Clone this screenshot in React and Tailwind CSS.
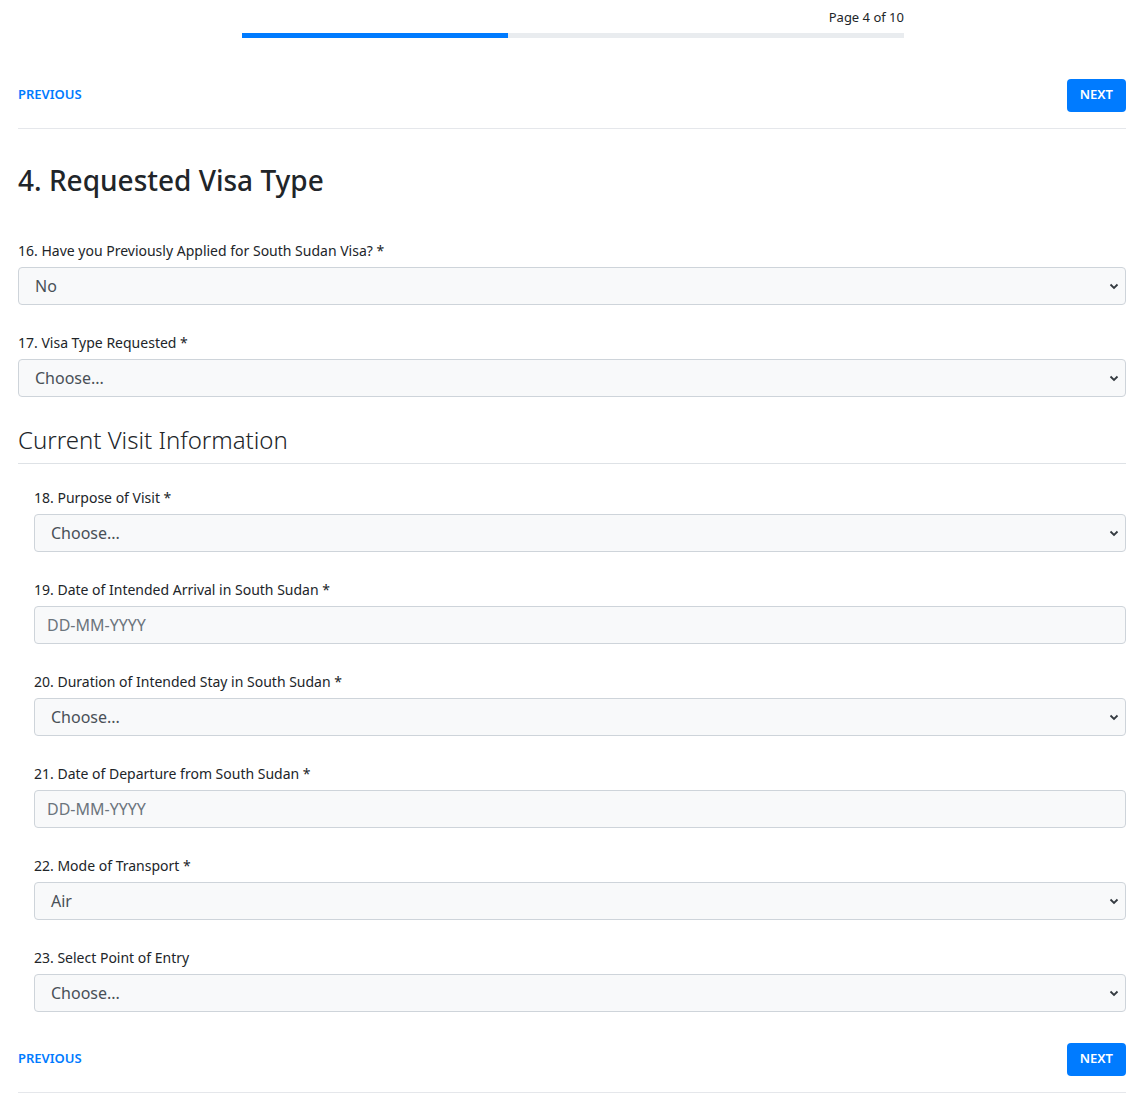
import React from "react";

const Chevron = () => (
  <svg className="absolute right-[6px] top-1/2 -translate-y-1/2 pointer-events-none" width="10" height="10" viewBox="0 0 10 10">
    <path d="M1.5 3.5 L5 7 L8.5 3.5" fill="none" stroke="#343a40" strokeWidth="1.8" />
  </svg>
);

const Select = ({ value }) => (
  <div className="relative h-[38px] border border-[#ced4da] rounded-[4px] bg-[#f8f9fa] flex items-center pl-4 text-[16px] text-[#495057]">
    {value}
    <Chevron />
  </div>
);

const DateInput = () => (
  <div className="h-[38px] border border-[#ced4da] rounded-[4px] bg-[#f8f9fa] flex items-center pl-3 text-[16px] text-[#6c757d]">
    DD-MM-YYYY
  </div>
);

const Field = ({ label, children }) => (
  <div className="mb-[16px]">
    <div className="text-[14px] text-[#212529] h-[38px] flex items-center pt-[5px] mb-[0px]">{label}</div>
    {children}
  </div>
);

const NavRow = () => (
  <div className="flex items-center justify-between h-[34px] pb-0">
    <span className="text-[13px] font-semibold text-[#007bff]">PREVIOUS</span>
    <span className="bg-[#007bff] text-white text-[13px] font-semibold rounded-[4px] px-[13px] h-[33px] flex items-center">NEXT</span>
  </div>
);

export default function App() {
  return (
    <div className="bg-white min-h-screen pl-[18px] pr-[21px]" style={{ fontFamily: '"Noto Sans", "Open Sans", sans-serif' }}>
      <div className="pt-[6px] flex flex-col items-end w-[662px] ml-[224px]">
        <span className="text-[13px] text-[#212529] leading-[22px]">Page 4 of 10</span>
        <div className="w-full h-[5px] bg-[#e9ecef] mt-[5px]">
          <div className="h-full bg-[#007bff] w-[266px]" />
        </div>
      </div>
      <div className="mt-[40px]">
        <NavRow />
      </div>
      <div className="border-b border-[#e5e7eb] mt-[16px]" />
      <h1 className="text-[28px] font-medium text-[#212529] mt-[31px] leading-[40px]">4. Requested Visa Type</h1>
      <div className="mt-[29px]">
        <Field label="16. Have you Previously Applied for South Sudan Visa? *">
          <Select value="No" />
        </Field>
        <Field label="17. Visa Type Requested *">
          <Select value="Choose..." />
        </Field>
      </div>
      <div className="text-[24px] font-light text-[#212529] mt-[28px] leading-[30px] pb-[8px] border-b border-[#dee2e6]">Current Visit Information</div>
      <div className="pl-[16px] mt-[12px]">
        <Field label="18. Purpose of Visit *"><Select value="Choose..." /></Field>
        <Field label="19. Date of Intended Arrival in South Sudan *"><DateInput /></Field>
        <Field label="20. Duration of Intended Stay in South Sudan *"><Select value="Choose..." /></Field>
        <Field label="21. Date of Departure from South Sudan *"><DateInput /></Field>
        <Field label="22. Mode of Transport *"><Select value="Air" /></Field>
        <Field label="23. Select Point of Entry"><Select value="Choose..." /></Field>
      </div>
      <div className="mt-[30px]">
        <NavRow />
      </div>
      <div className="border-b border-[#e5e7eb] mt-[16px]" />
    </div>
  );
}
